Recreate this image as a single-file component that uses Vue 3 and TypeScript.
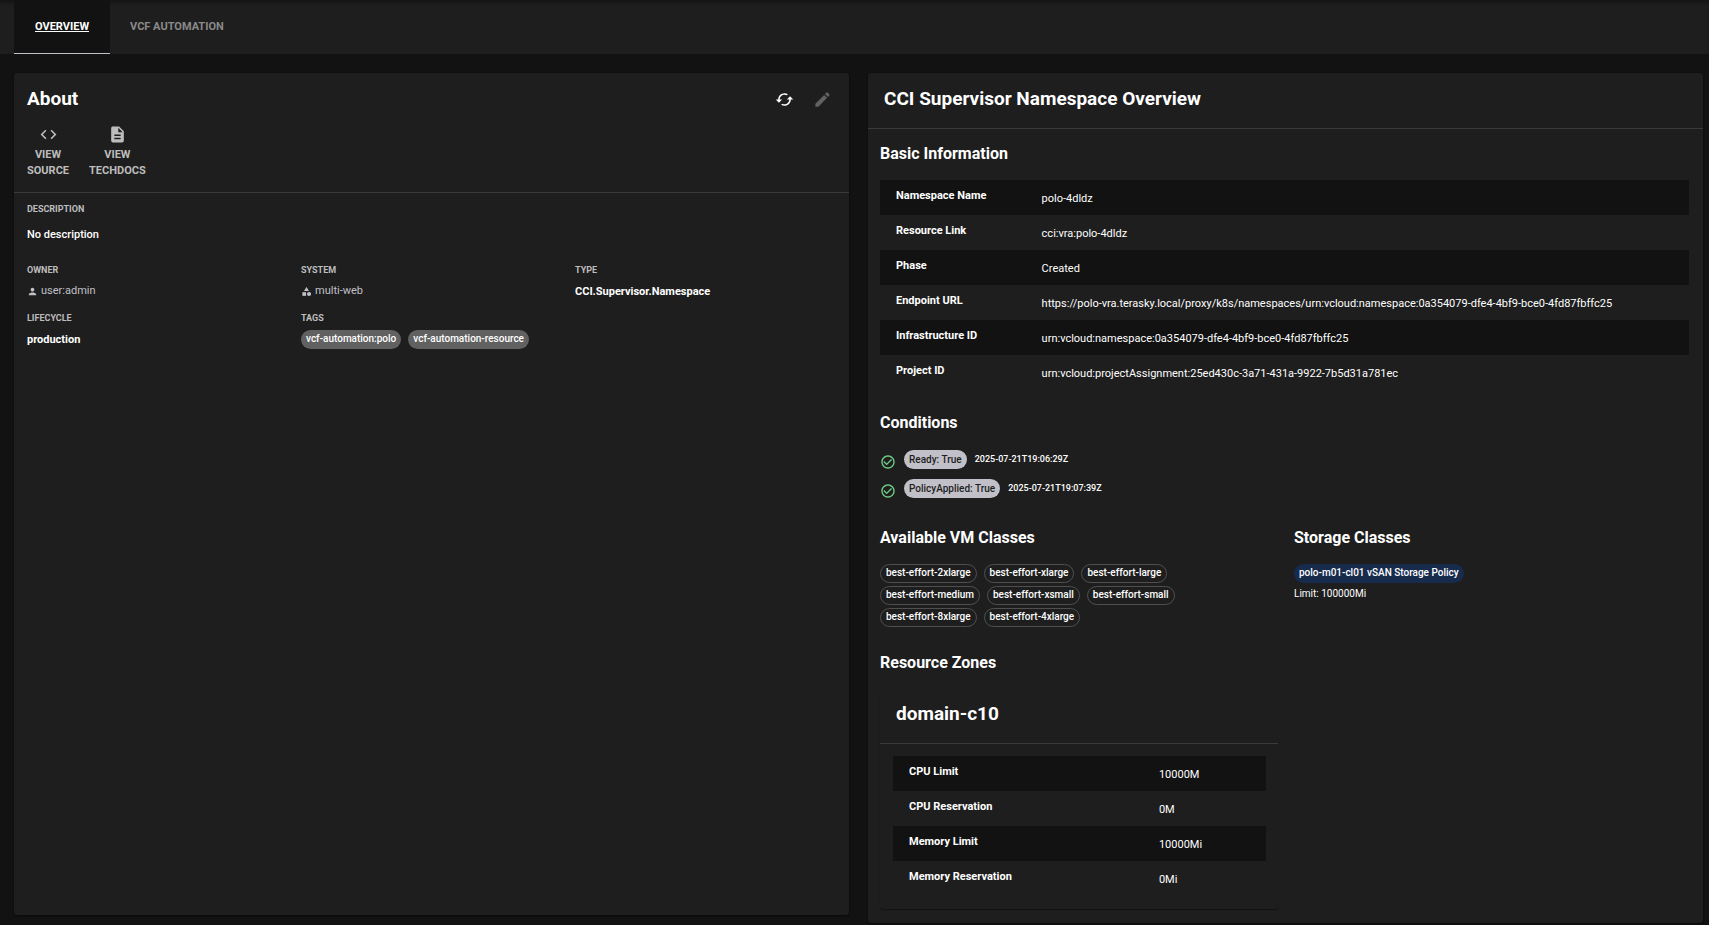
<script setup lang="ts">
interface Row {
  label: string
  value: string
}

const basicInfo: Row[] = [
  { label: 'Namespace Name', value: 'polo-4dldz' },
  { label: 'Resource Link', value: 'cci:vra:polo-4dldz' },
  { label: 'Phase', value: 'Created' },
  {
    label: 'Endpoint URL',
    value:
      'https://polo-vra.terasky.local/proxy/k8s/namespaces/urn:vcloud:namespace:0a354079-dfe4-4bf9-bce0-4fd87fbffc25',
  },
  { label: 'Infrastructure ID', value: 'urn:vcloud:namespace:0a354079-dfe4-4bf9-bce0-4fd87fbffc25' },
  { label: 'Project ID', value: 'urn:vcloud:projectAssignment:25ed430c-3a71-431a-9922-7b5d31a781ec' },
]

const conditions = [
  { name: 'Ready: True', time: '2025-07-21T19:06:29Z' },
  { name: 'PolicyApplied: True', time: '2025-07-21T19:07:39Z' },
]

const vmClasses: string[] = [
  'best-effort-2xlarge',
  'best-effort-xlarge',
  'best-effort-large',
  'best-effort-medium',
  'best-effort-xsmall',
  'best-effort-small',
  'best-effort-8xlarge',
  'best-effort-4xlarge',
]

const zoneLimits: Row[] = [
  { label: 'CPU Limit', value: '10000M' },
  { label: 'CPU Reservation', value: '0M' },
  { label: 'Memory Limit', value: '10000Mi' },
  { label: 'Memory Reservation', value: '0Mi' },
]

const tags: string[] = ['vcf-automation:polo', 'vcf-automation-resource']
</script>

<template>
  <div class="page">
    <nav class="tabs">
      <button type="button" class="tab active">OVERVIEW</button>
      <button type="button" class="tab">VCF AUTOMATION</button>
    </nav>

    <main class="content">
      <section class="card about">
        <header class="about-head">
          <div class="title-row">
            <h2 class="title">About</h2>
            <div class="actions">
              <button type="button" class="icon-btn" aria-label="Refresh">
                <svg viewBox="0 0 24 24" width="19" height="19">
                  <path d="m19 8-4 4h3c0 3.31-2.69 6-6 6-1.01 0-1.97-.25-2.8-.7l-1.46 1.46C8.97 19.54 10.43 20 12 20c4.42 0 8-3.58 8-8h3l-4-4zM6 12c0-3.31 2.69-6 6-6 1.01 0 1.97.25 2.8.7l1.46-1.46C15.03 4.46 13.57 4 12 4c-4.42 0-8 3.58-8 8H1l4 4 4-4H6z" />
                </svg>
              </button>
              <button type="button" class="icon-btn" aria-label="Edit" disabled>
                <svg viewBox="0 0 24 24" width="19" height="19">
                  <path d="M3 17.25V21h3.75L17.81 9.94l-3.75-3.75L3 17.25zM20.71 7.04c.39-.39.39-1.02 0-1.41l-2.34-2.34a.9959.9959 0 0 0-1.41 0l-1.83 1.83 3.75 3.75 1.83-1.83z" />
                </svg>
              </button>
            </div>
          </div>
          <div class="links">
            <a href="#source" class="link">
              <svg viewBox="0 0 24 24" width="19" height="19">
                <path d="M9.4 16.6 4.8 12l4.6-4.6L8 6l-6 6 6 6 1.4-1.4zm5.2 0 4.6-4.6-4.6-4.6L16 6l6 6-6 6-1.4-1.4z" />
              </svg>
              <span>VIEW<br />SOURCE</span>
            </a>
            <a href="#techdocs" class="link">
              <svg viewBox="0 0 24 24" width="19" height="19">
                <path d="M14 2H6c-1.1 0-1.99.9-1.99 2L4 20c0 1.1.89 2 1.99 2H18c1.1 0 2-.9 2-2V8l-6-6zm2 16H8v-2h8v2zm0-4H8v-2h8v2zm-3-5V3.5L18.5 9H13z" />
              </svg>
              <span>VIEW<br />TECHDOCS</span>
            </a>
          </div>
        </header>

        <div class="fields">
          <div class="field wide">
            <h3 class="label">DESCRIPTION</h3>
            <p class="description">No description</p>
          </div>
          <div class="field">
            <h3 class="label">OWNER</h3>
            <a href="#admin" class="entity">
              <svg viewBox="0 0 24 24" width="11" height="11">
                <path d="M12 12c2.21 0 4-1.79 4-4s-1.79-4-4-4-4 1.79-4 4 1.79 4 4 4zm0 2c-2.67 0-8 1.34-8 4v2h16v-2c0-2.66-5.33-4-8-4z" />
              </svg>
              user:admin
            </a>
          </div>
          <div class="field">
            <h3 class="label">SYSTEM</h3>
            <a href="#multi-web" class="entity">
              <svg viewBox="0 0 24 24" width="11" height="11">
                <path d="m12 2-5.5 9h11z" />
                <circle cx="17.5" cy="17.5" r="4.5" />
                <path d="M3 13.5h8v8H3z" />
              </svg>
              multi-web
            </a>
          </div>
          <div class="field">
            <h3 class="label">TYPE</h3>
            <p class="value">CCI.Supervisor.Namespace</p>
          </div>
          <div class="field">
            <h3 class="label">LIFECYCLE</h3>
            <p class="value">production</p>
          </div>
          <div class="field">
            <h3 class="label">TAGS</h3>
            <div class="tag-list">
              <span v-for="tag in tags" :key="tag" class="chip grey">{{ tag }}</span>
            </div>
          </div>
        </div>
      </section>

      <section class="card overview">
        <h2 class="title overview-title">CCI Supervisor Namespace Overview</h2>
        <div class="overview-body">
          <h3 class="subtitle">Basic Information</h3>
          <table class="info">
            <tbody>
              <tr v-for="row in basicInfo" :key="row.label">
                <th scope="row">{{ row.label }}</th>
                <td>{{ row.value }}</td>
              </tr>
            </tbody>
          </table>

          <h3 class="subtitle">Conditions</h3>
          <ul class="conditions">
            <li v-for="c in conditions" :key="c.name">
              <svg class="ok" viewBox="0 0 24 24" width="16" height="16">
                <path d="M16.59 7.58 10 14.17l-3.59-3.58L5 12l5 5 8-8zM12 2C6.48 2 2 6.48 2 12s4.48 10 10 10 10-4.48 10-10S17.52 2 12 2zm0 18c-4.42 0-8-3.58-8-8s3.58-8 8-8 8 3.58 8 8-3.58 8-8 8z" />
              </svg>
              <span class="chip light">{{ c.name }}</span>
              <time :datetime="c.time">{{ c.time }}</time>
            </li>
          </ul>

          <div class="columns">
            <div>
              <h3 class="subtitle">Available VM Classes</h3>
              <div class="vm-list">
                <span v-for="vm in vmClasses" :key="vm" class="chip outlined">{{ vm }}</span>
              </div>
            </div>
            <div>
              <h3 class="subtitle">Storage Classes</h3>
              <span class="chip navy">polo-m01-cl01 vSAN Storage Policy</span>
              <p class="limit">Limit: 100000Mi</p>
            </div>
          </div>

          <h3 class="subtitle">Resource Zones</h3>
          <div class="columns">
            <article class="zone">
              <h2 class="title zone-title">domain-c10</h2>
              <div class="zone-body">
                <table class="info zone-table">
                  <tbody>
                    <tr v-for="row in zoneLimits" :key="row.label">
                      <th scope="row">{{ row.label }}</th>
                      <td>{{ row.value }}</td>
                    </tr>
                  </tbody>
                </table>
              </div>
            </article>
          </div>
        </div>
      </section>
    </main>
  </div>
</template>

<style>
body {
  background: #121212;
}
</style>

<style scoped>
.page {
  box-sizing: border-box;
  min-height: 100vh;
  background: #121212;
  color: #fff;
  font-family: Roboto, 'Liberation Sans', sans-serif;
  font-size: 11px;
  line-height: 16px;
}

h2,
h3,
p,
ul {
  margin: 0;
  padding: 0;
}

svg {
  display: block;
  fill: currentColor;
}

button {
  border: 0;
  background: none;
  color: inherit;
  font: inherit;
}

a {
  color: inherit;
  text-decoration: none;
}

.tabs {
  display: flex;
  height: 54px;
  padding-left: 14px;
  background: linear-gradient(#141414, #1e1e1e 6px);
}

.tab {
  padding: 0 20px;
  color: #8a8a8a;
  font-weight: 700;
}

.tab.active {
  border-bottom: 1px solid #c1c0c8;
  padding: 1px 21px 0;
  background: #121212;
  color: #fff;
  text-decoration: underline;
}

.content {
  display: grid;
  grid-template-columns: 1fr 1fr;
  gap: 19px;
  align-items: start;
  padding: 19px 6px 2px 14px;
}

.card {
  border-radius: 3px;
  background: #1e1e1e;
  box-shadow: 0 1px 2px #0a0a0a;
}

.about {
  min-height: 842px;
}

.title {
  font-size: 19px;
  font-weight: 700;
  line-height: 24px;
}

.about-head {
  padding: 14px 13px 13px;
  border-bottom: 1px solid #3a3a3a;
}

.title-row {
  display: flex;
  justify-content: space-between;
  align-items: center;
}

.actions {
  display: flex;
  gap: 19px;
  padding-right: 4px;
}

.icon-btn {
  padding: 0;
}

.icon-btn:disabled {
  color: #626262;
}

.links {
  display: flex;
  gap: 20px;
  margin-top: 14px;
}

.link {
  display: flex;
  flex-direction: column;
  align-items: center;
  gap: 3px;
  color: #bdbdbd;
  font-weight: 700;
  text-align: center;
}

.fields {
  display: grid;
  grid-template-columns: repeat(3, 1fr);
  padding: 10px 0 0 13px;
}

.field {
  min-height: 48px;
}

.wide {
  grid-column: 1 / -1;
  min-height: 61px;
}

.label {
  color: #bdbdbd;
  font-size: 9px;
  font-weight: 700;
  line-height: 12px;
}

.description {
  margin-top: 12px;
  font-weight: 500;
}

.entity {
  display: flex;
  align-items: center;
  gap: 3px;
  margin-top: 7px;
  color: #c1c0c8;
}

.value {
  margin-top: 8px;
  font-weight: 700;
}

.tag-list {
  display: flex;
  gap: 7px;
  margin-top: 6px;
}

.chip {
  display: inline-block;
  box-sizing: border-box;
  height: 19px;
  padding: 0 5px;
  border-radius: 10px;
  font-size: 10px;
  font-weight: 500;
  line-height: 18px;
  white-space: nowrap;
}

.grey {
  background: #616161;
}

.light {
  background: #c1c0c8;
  color: #1e1e1e;
  line-height: 19px;
}

.outlined {
  border: 1px solid #4f4f4f;
  line-height: 16px;
}

.navy {
  display: block;
  width: fit-content;
  background: #172b4d;
}

.overview-title {
  padding: 14px 16px 17px;
  border-bottom: 1px solid #3a3a3a;
}

.overview-body {
  padding: 12px 14px 14px 12px;
}

.subtitle {
  padding-top: 1px;
  margin-bottom: 14px;
  font-size: 16px;
  font-weight: 700;
  line-height: 24px;
}

.info {
  width: 100%;
  margin-bottom: 20px;
  border-collapse: collapse;
}

.info tr:nth-child(odd) {
  background: #121212;
}

.info th,
.info td {
  height: 35px;
  box-sizing: border-box;
  padding: 0 16px;
  text-align: left;
  vertical-align: top;
}

.info th {
  width: 18%;
  padding-top: 8px;
  font-weight: 700;
}

.info td {
  padding-top: 11px;
  font-weight: 400;
}

.conditions {
  list-style: none;
  padding: 1px 0 17px;
}

.conditions li {
  display: flex;
  height: 29px;
}

.ok {
  margin: 4px 8px 0 0;
  color: #71cf88;
}

.conditions time {
  margin-left: 8px;
  font-size: 9px;
  font-weight: 500;
  line-height: 19px;
}

.columns {
  display: grid;
  grid-template-columns: 1fr 1fr;
  gap: 16px;
  margin-right: -3px;
}

.vm-list {
  display: flex;
  flex-wrap: wrap;
  gap: 3px 7px;
  max-width: 320px;
  margin-bottom: 23px;
}

.limit {
  margin-top: 3px;
  font-size: 10px;
}

.zone {
  border-radius: 3px;
  box-shadow: 0 1px 1px #121212;
}

.zone-title {
  padding: 13px 16px 17px;
  border-bottom: 1px solid #3a3a3a;
}

.zone-body {
  padding: 12px 12px 13px 13px;
}

.zone-table {
  margin-bottom: 0;
}

.zone-table th {
  width: 67%;
}
</style>
